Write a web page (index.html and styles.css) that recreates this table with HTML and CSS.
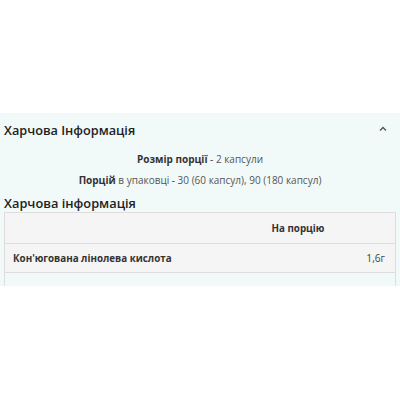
FILE: index.html
```html
<!DOCTYPE html>
<html lang="uk">
<head>
    <meta charset="UTF-8">
    <title>Харчова Інформація</title>
    <link rel="stylesheet" href="styles.css">
</head>
<body>
    <section class="panel">
        <div class="panel-head">
            <h2>Харчова Інформація</h2>
            <span class="chevron">
                <svg width="8" height="5" viewBox="0 0 8 5"><path d="M1 4.5 L4 1.5 L7 4.5" fill="none" stroke="#555" stroke-width="1.4"/></svg>
            </span>
        </div>
        <p class="serving first"><b>Розмір порції</b> - <span class="muted">2 капсули</span></p>
        <p class="serving"><b>Порцій</b> <span class="muted">в упаковці</span> - <span class="muted">30 (60 капсул), 90 (180 капсул)</span></p>
        <h3>Харчова інформація</h3>
        <table class="facts">
            <colgroup>
                <col class="col-name">
                <col class="col-per">
                <col>
            </colgroup>
            <tr class="head-row">
                <td></td>
                <td class="per">На порцію</td>
                <td></td>
            </tr>
            <tr class="data-row">
                <td class="name">Кон'югована лінолева кислота</td>
                <td></td>
                <td class="amount">1,6г</td>
            </tr>
            <tr class="cut">
                <td></td>
                <td></td>
                <td></td>
            </tr>
        </table>
    </section>
</body>
</html>
```

FILE: styles.css
```css
body {
    margin: 0;
    background-color: #fff;
    font-family: "Open Sans", Arial, sans-serif;
    color: #333;
}
.panel {
    margin-top: 113px;
    height: 173px;
    overflow: hidden;
    background-color: #f1f9f9;
    padding: 0 4px;
}
.panel-head {
    display: flex;
    justify-content: space-between;
    align-items: center;
    padding-top: 8px;
}
.panel-head h2 {
    margin: 0;
    font-size: 12.7px;
    font-weight: 600;
    line-height: 18px;
    color: #222;
}
.chevron {
    margin-right: 9px;
    display: flex;
    margin-top: -3px;
}
.serving {
    text-align: center;
    font-size: 10px;
    margin: 0;
    line-height: 21px;
    color: #333;
}
.serving.first {
    margin-top: 10px;
}
.serving b {
    font-weight: 700;
}
.muted {
    color: #555;
}
h3 {
    margin: 3px 0 0;
    font-size: 12.8px;
    font-weight: 600;
    line-height: 18px;
    color: #222;
}
.facts {
    width: 100%;
    border-collapse: collapse;
    table-layout: fixed;
    font-size: 9.8px;
    background-color: #f5f5f5;
}
.col-name {
    width: 259px;
}
.col-per {
    width: 70px;
}
.facts td {
    border-top: 1px solid #ddd;
    border-bottom: 1px solid #ddd;
    padding: 0 8px;
    white-space: nowrap;
}
.head-row td {
    height: 30px;
}
.data-row td {
    height: 28px;
}
.facts td:first-child {
    border-left: 1px solid #ddd;
}
.facts td:last-child {
    border-right: 1px solid #ddd;
    padding-right: 10px;
}
.per {
    font-weight: 700;
    padding-left: 4px;
}
.name {
    font-weight: 700;
}
.amount {
    text-align: right;
    color: #444;
    font-size: 10.2px;
}
.cut td {
    height: 20px;
    background-color: #f1f9f9;
    border-top: none;
    border-right: none;
    border-bottom: none;
}
```
